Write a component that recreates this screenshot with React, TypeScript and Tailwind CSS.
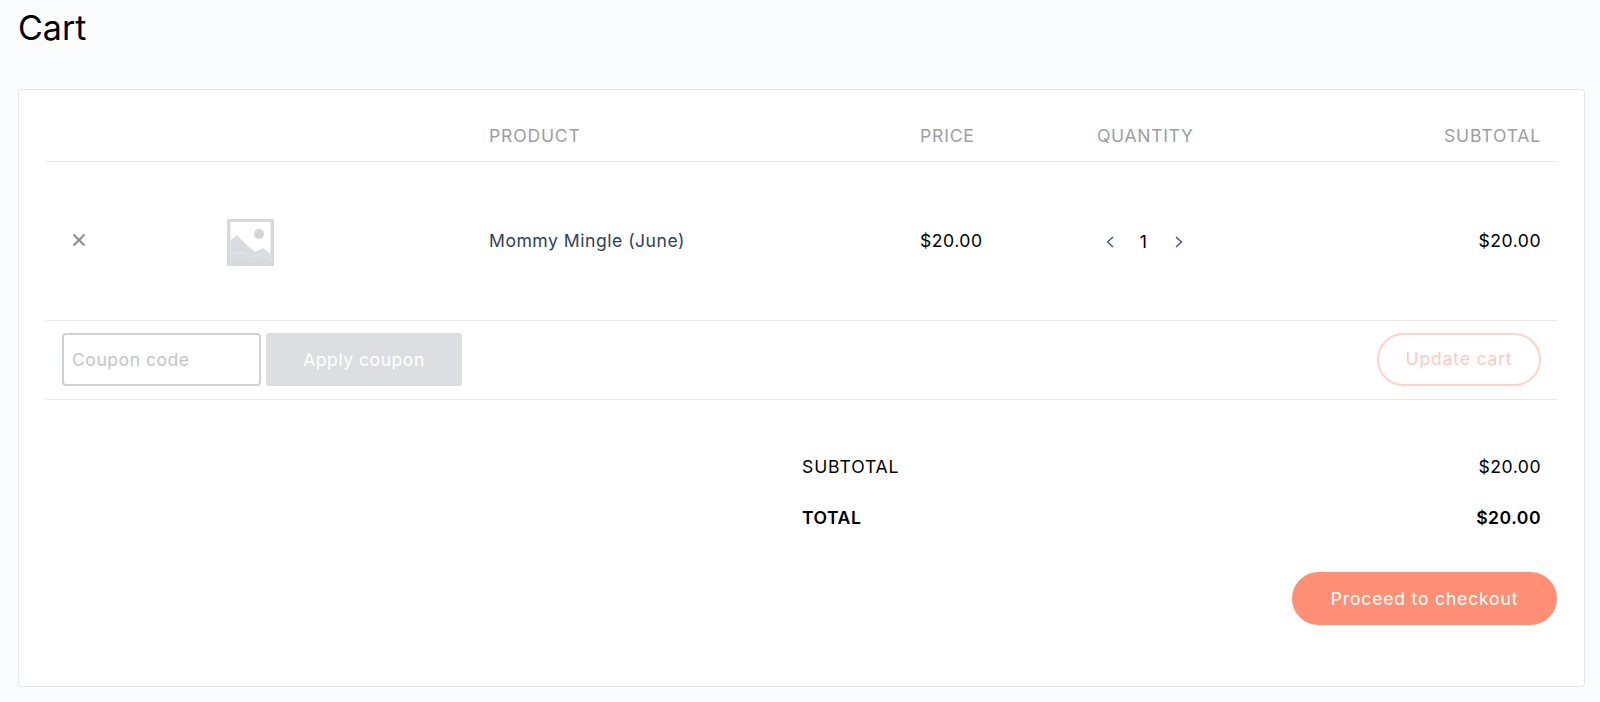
import React from "react";

function Thumb() {
  return (
    <svg width="47" height="47" viewBox="0 0 47 47" aria-hidden="true">
      <rect x="0" y="0" width="47" height="47" rx="0.5" fill="#d6d8db" />
      <rect x="3.5" y="3" width="40" height="39.5" fill="#ffffff" />
      <path d="M3.5 21 L10 16 L21 27 L28 33 L36 29 L43.5 35 L43.5 43 L3.5 43 Z" fill="#d9dbde" />
      <path d="M7 35 L14 33 L20 36 M25 38 L34 36 L40 39" fill="none" stroke="#e2e3e6" strokeWidth="1.5" />
      <circle cx="32" cy="15" r="5" fill="#d2d4d7" />
    </svg>
  );
}

function Chevron({ dir }: { dir: "left" | "right" }) {
  return (
    <svg width="10" height="14" viewBox="0 0 10 14" fill="none" stroke="#3c4a5e" strokeWidth="1.2" aria-hidden="true">
      <path d={dir === "left" ? "M8 2 L2.5 7 L8 12" : "M2 2 L7.5 7 L2 12"} />
    </svg>
  );
}

export default function App() {
  return (
    <div className="min-h-[702px] bg-[#fafbfd] px-[18px] font-['Inter',sans-serif] text-[17.6px] text-black tracking-[0.5px]">
      <h1 className="h-[89px] pt-[7px] text-[34px] leading-[41px] font-normal tracking-normal">Cart</h1>
      <div className="flex h-[598px] w-[1567px] flex-col rounded-[4px] border border-[#e4e7ec] bg-white px-[27px]">
        <div className="grid h-[72px] shrink-0 grid-cols-[443px_431px_177px_1fr] items-center border-b border-[#e5e7eb] pt-[22px] tracking-[0.65px] text-[#9b9ea5]">
          <span />
          <span className="tracking-[0.8px]">PRODUCT</span>
          <span className="tracking-[0.8px]">PRICE</span>
          <div className="flex justify-between pr-[16px]">
            <span>QUANTITY</span>
            <span className="tracking-[0.8px]">SUBTOTAL</span>
          </div>
        </div>

        <div className="grid h-[159px] shrink-0 grid-cols-[443px_431px_177px_1fr] items-center border-b border-[#e5e7eb]">
          <div className="flex items-center">
            <svg className="ml-[26px] mb-[3px]" width="14" height="14" viewBox="0 0 14 14" stroke="#8f9297" strokeWidth="2.2" aria-hidden="true">
              <path d="M1.5 1.5 L12.5 12.5 M12.5 1.5 L1.5 12.5" />
            </svg>
            <div className="ml-[141px] mt-[2px]">
              <Thumb />
            </div>
          </div>
          <a className="text-[#2f4158]">Mommy Mingle (June)</a>
          <span>$20.00</span>
          <div className="flex items-center justify-between pr-[16px]">
            <div className="flex items-center pl-[8px] pt-[2px]">
              <Chevron dir="left" />
              <span className="w-[59px] pr-[2px] text-center">1</span>
              <Chevron dir="right" />
            </div>
            <span>$20.00</span>
          </div>
        </div>

        <div className="flex h-[79px] shrink-0 items-start justify-between border-b border-[#e5e7eb] pt-[12px] pr-[16px] pl-[16px]">
          <div className="flex items-center gap-[5px]">
            <div className="flex h-[53px] w-[199px] items-center rounded-[4px] border-2 border-[#d0d1d5] pt-[2px] pl-[8px] text-[#c3c5c9]">
              Coupon code
            </div>
            <button className="h-[53px] w-[196px] rounded-[3px] bg-[#dddee1] pt-[2px] text-white">Apply coupon</button>
          </div>
          <button className="h-[53px] w-[164px] rounded-full border-2 border-[#ffd3c9] tracking-[0.8px] text-[#ffcabd]">Update cart</button>
        </div>

        <div className="flex flex-col pt-[42px]">
          <div className="ml-[756px] flex h-[50px] items-center justify-between pr-[16px]">
            <span className="tracking-[0.85px]">SUBTOTAL</span>
            <span>$20.00</span>
          </div>
          <div className="ml-[756px] flex h-[50px] items-center justify-between pt-[2px] pr-[16px] font-semibold">
            <span>TOTAL</span>
            <span>$20.00</span>
          </div>
          <div className="mt-[30px] flex justify-end">
            <button className="h-[53px] w-[265px] rounded-full bg-[#ff8f74] pt-[2px] tracking-[0.8px] text-white">Proceed to checkout</button>
          </div>
        </div>
      </div>
    </div>
  );
}
